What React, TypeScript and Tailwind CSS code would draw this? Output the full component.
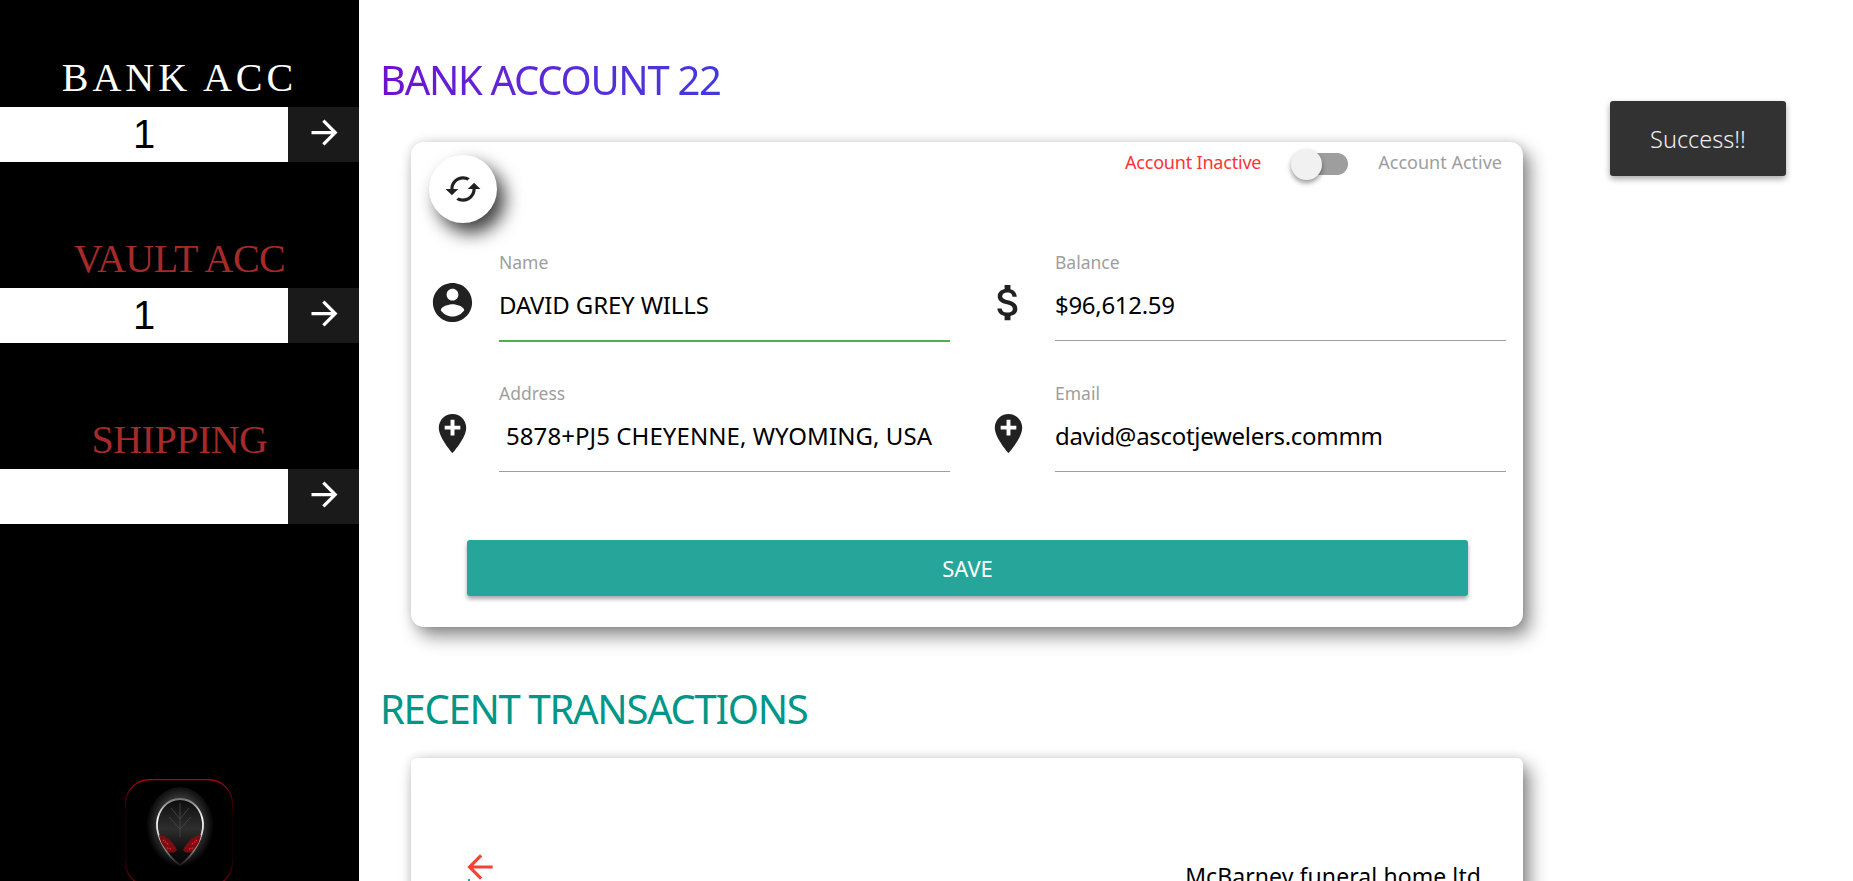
import React from 'react';

const Icon = ({ d, className }: { d: string; className: string }) => (
  <svg viewBox="0 0 24 24" fill="currentColor" className={className}>
    <path d={d} />
  </svg>
);

const arrowForward = 'M12 4l-1.41 1.41L16.17 11H4v2h12.17l-5.58 5.59L12 20l8-8z';
const arrowBack = 'M20 11H7.83l5.59-5.59L12 4l-8 8 8 8 1.41-1.41L7.83 13H20v-2z';
const cached =
  'M19 8l-4 4h3c0 3.31-2.69 6-6 6-1.01 0-1.97-.25-2.8-.7l-1.46 1.46C8.97 19.54 10.43 20 12 20c4.42 0 8-3.58 8-8h3l-4-4zM6 12c0-3.31 2.69-6 6-6 1.01 0 1.97.25 2.8.7l1.46-1.46C15.03 4.46 13.57 4 12 4c-4.42 0-8 3.58-8 8H1l4 4 4-4H6z';
const accountCircle =
  'M12 2C6.48 2 2 6.48 2 12s4.48 10 10 10 10-4.48 10-10S17.52 2 12 2zm0 3c1.66 0 3 1.34 3 3s-1.34 3-3 3-3-1.34-3-3 1.34-3 3-3zm0 14.2c-2.5 0-4.71-1.28-6-3.22.03-1.99 4-3.08 6-3.08 1.99 0 5.97 1.09 6 3.08-1.29 1.94-3.5 3.22-6 3.22z';
const addLocation =
  'M12 2C8.14 2 5 5.14 5 9c0 5.25 7 13 7 13s7-7.75 7-13c0-3.86-3.14-7-7-7zm4 8h-3v3h-2v-3H8V8h3V5h2v3h3v2z';
const attachMoney =
  'M11.8 10.9c-2.27-.59-3-1.2-3-2.15 0-1.09 1.01-1.85 2.7-1.85 1.78 0 2.44.85 2.5 2.1h2.21c-.07-1.72-1.12-3.3-3.21-3.81V3h-3v2.16c-1.94.42-3.5 1.68-3.5 3.61 0 2.31 1.91 3.46 4.7 4.13 2.5.6 3 1.48 3 2.41 0 .69-.49 1.79-2.7 1.79-2.06 0-2.87-.92-2.98-2.1h-2.2c.12 2.19 1.76 3.42 3.68 3.83V21h3v-2.15c1.95-.37 3.5-1.5 3.5-3.55 0-2.84-2.43-3.81-4.7-4.4z';

const SideBlock = ({ title, value, className }: { title: string; value: string; className: string }) => (
  <div>
    <h2 className={`h-[46px] mb-[6px] text-center text-[40px] leading-[46px] font-['Liberation_Serif',serif] ${className}`}>
      {title}
    </h2>
    <div className="flex h-[55px]">
      <div className="w-[288px] bg-white text-center text-black text-[40px] leading-[55px] font-['Liberation_Sans',sans-serif]">
        {value}
      </div>
      <button className="flex flex-1 items-center justify-center bg-[#1a1a1a] pb-[5px] pl-[2px] text-white">
        <Icon d={arrowForward} className="w-[39px] h-[39px]" />
      </button>
    </div>
  </div>
);

const Logo = () => (
  <svg viewBox="0 0 108 108" className="w-[108px] h-[108px] shrink-0 ml-[125px]">
    <defs>
      <linearGradient id="edge" x1="0" y1="0" x2="0" y2="1">
        <stop offset="0" stopColor="#c00010" />
        <stop offset="0.12" stopColor="#700008" />
        <stop offset="0.3" stopColor="#140001" />
        <stop offset="0.75" stopColor="#140001" />
        <stop offset="1" stopColor="#900010" />
      </linearGradient>
      <radialGradient id="glow" cx="0.5" cy="0.45" r="0.5">
        <stop offset="0" stopColor="#b0b0b0" />
        <stop offset="0.65" stopColor="#707070" />
        <stop offset="1" stopColor="#000" />
      </radialGradient>
      <linearGradient id="head" x1="0" y1="0" x2="0" y2="1">
        <stop offset="0" stopColor="#0c0c0c" />
        <stop offset="0.45" stopColor="#2e2e2e" />
        <stop offset="0.8" stopColor="#0c0c0c" />
        <stop offset="1" stopColor="#050505" />
      </linearGradient>
      <linearGradient id="rim" x1="0" y1="0" x2="0" y2="1">
        <stop offset="0" stopColor="#777" />
        <stop offset="0.3" stopColor="#ffffff" />
        <stop offset="0.65" stopColor="#bbbbbb" />
        <stop offset="1" stopColor="#1a1a1a" />
      </linearGradient>
    </defs>
    <rect x="0.6" y="0.6" width="106.8" height="106.8" rx="24" fill="#000" stroke="url(#edge)" strokeWidth="1.2" />
    <ellipse cx="55" cy="50" rx="34" ry="42" fill="url(#glow)" opacity="0.45" />
    <path d="M55 20C42 20 33 31 32 44c-1 12 9 33 23 42 14-9 24-30 23-42-1-13-10-24-23-24z" fill="url(#head)" stroke="url(#rim)" strokeWidth="1.8" />
    <path d="M55 24v34M55 40l-9-11M55 40l9-11M55 50l-11-12M55 50l11-12" stroke="#484848" strokeWidth="0.8" fill="none" />
    <path d="M34 56c6 0 14 6 18 15-2 3-6 3-8 2-5-4-9-10-10-17z" fill="#7a0c12" />
    <path d="M76 56c-6 0-14 6-18 15 2 3 6 3 8 2 5-4 9-10 10-17z" fill="#7a0c12" />
    <path d="M38 61l6 5M42 69l4 1M72 61l-6 5M68 69l-4 1" stroke="#e8242e" strokeWidth="1.4" strokeDasharray="1.5 1" fill="none" />
  </svg>
);

const Field = ({ icon, label, value, line, valueClass }: { icon: string; label: string; value: string; line: string; valueClass: string }) => (
  <div className="flex">
    <div className="w-[48px] mr-[23px] pl-[1px] pt-[27px] text-[#212121]">
      <Icon d={icon} className="w-[47px] h-[47px]" />
    </div>
    <div className="flex-1">
      <div className="h-[27px] text-[17.5px] leading-[20px] text-[#9e9e9e]">{label}</div>
      <div className={`h-[61px] text-[24px] leading-[52px] text-black ${valueClass}`}>{value}</div>
      <div className={line} />
    </div>
  </div>
);

const Shadow = 'shadow-[7px_9px_18px_rgba(0,0,0,0.45),0_0_10px_rgba(0,0,0,0.12)]';

export default function App() {
  return (
    <div className="relative flex h-screen overflow-hidden bg-white font-['Noto_Sans',sans-serif]">
      <aside className="flex w-[359px] shrink-0 flex-col gap-[74px] bg-black pt-[55px]">
        <SideBlock title="BANK ACC" value="1" className="text-white tracking-[4px]" />
        <SideBlock title="VAULT ACC" value="1" className="text-[#a52a2a] tracking-[-0.5px]" />
        <SideBlock title="SHIPPING" value="" className="text-[#a52a2a] tracking-[-0.5px]" />
        <div className="mt-[181px]">
          <Logo />
        </div>
      </aside>

      <main className="flex-1 pt-[51px]">
        <h1 className="ml-[21px] h-[60px] w-[440px] bg-gradient-to-r from-[#6f0fcf] to-[#2b40e0] bg-clip-text text-[40px] leading-[58px] tracking-[-1.3px] text-transparent">
          BANK ACCOUNT 22
        </h1>
        <section className={`ml-[52px] mt-[31px] h-[485px] w-[1112px] rounded-[13px] bg-white ${Shadow}`}>
          <div className="flex justify-between pl-[18px] pr-[21px] pt-[13px]">
            <button className="flex h-[68px] w-[68px] items-center justify-center rounded-full bg-white text-[#212121] shadow-[8px_10px_18px_rgba(0,0,0,0.75)]">
              <Icon d={cached} className="w-[38px] h-[38px]" />
            </button>
            <div className="-mt-[5px] flex items-start text-[18px] leading-[24px]">
              <span className="tracking-[-0.2px] text-[#ff3333]">Account Inactive</span>
              <span className="relative ml-[32px] mr-[30px] mt-[3px] h-[22px] w-[55px] rounded-full bg-[#9e9e9e]">
                <span className="absolute -left-[2px] -top-[4px] h-[31px] w-[31px] rounded-full bg-[#f1f1f1] shadow-[0_3px_5px_rgba(0,0,0,0.4)]" />
              </span>
              <span className="text-[#9e9e9e]">Account Active</span>
            </div>
          </div>
          <div className="mt-[29px] grid grid-cols-[522px_522px] gap-x-[34px] gap-y-[41px] px-[17px]">
            <Field icon={accountCircle} label="Name" value="DAVID GREY WILLS" line="h-[2px] bg-[#4caf50]" valueClass="tracking-[-0.15px]" />
            <Field icon={attachMoney} label="Balance" value="$96,612.59" line="h-px bg-[#9e9e9e]" valueClass="tracking-[-0.3px]" />
            <Field icon={addLocation} label="Address" value="5878+PJ5 CHEYENNE, WYOMING, USA" line="h-px bg-[#9e9e9e]" valueClass="pl-[7px] tracking-[0.07px]" />
            <Field icon={addLocation} label="Email" value="david@ascotjewelers.commm" line="h-px bg-[#9e9e9e]" valueClass="tracking-[-0.3px]" />
          </div>
          <div className="mt-[68px] px-[56px]">
            <button className="h-[56px] w-[1001px] rounded-[3px] bg-[#26a69a] text-[22px] text-white shadow-[0_3px_4px_rgba(0,0,0,0.35)]">
              SAVE
            </button>
          </div>
        </section>

        <h2 className="mt-[55px] h-[60px] pl-[21px] text-[40px] leading-[54px] tracking-[-1.3px] text-[#009688]">
          RECENT TRANSACTIONS
        </h2>
        <section className={`ml-[52px] mt-[16px] flex h-[300px] w-[1112px] justify-between rounded-[6px] bg-white pl-[50px] pr-[42px] pt-[90px] ${Shadow}`}>
          <div className="flex flex-col">
            <Icon d={arrowBack} className="h-[38px] w-[38px] text-[#f44336]" />
            <span className="ml-[7px] -mt-[7px] h-[2px] w-[2px] bg-[#26a69a]" />
          </div>
          <span className="mt-[12px] text-[23px] leading-[32px] tracking-[0.08px] text-black">McBarney funeral home ltd</span>
        </section>
      </main>

      <div className="absolute left-[1610px] top-[101px] flex h-[75px] w-[176px] items-center justify-center rounded-[3px] bg-[#323232] pt-[2px] text-[23.5px] font-light text-[#eeeeee] shadow-[0_3px_6px_rgba(0,0,0,0.35)]">
        Success!!
      </div>
    </div>
  );
}
